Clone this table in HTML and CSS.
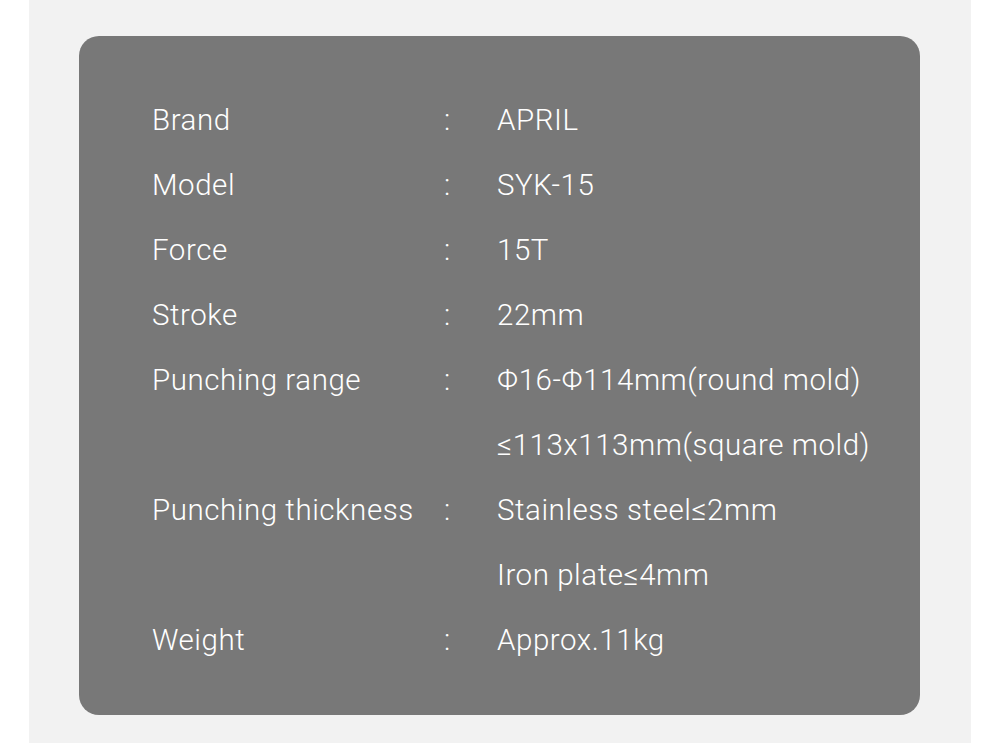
FILE: index.html
```html
<!DOCTYPE html>
<html lang="en">
<head>
<meta charset="utf-8">
<title>Specifications</title>
<link rel="stylesheet" href="styles.css">
</head>
<body>
<div class="page">
  <div class="card">
    <div class="specs">
      <div class="label">Brand</div><div class="colon">:</div><div class="value">APRIL</div>
      <div class="label">Model</div><div class="colon">:</div><div class="value">SYK-15</div>
      <div class="label">Force</div><div class="colon">:</div><div class="value">15T</div>
      <div class="label">Stroke</div><div class="colon">:</div><div class="value">22mm</div>
      <div class="label">Punching range</div><div class="colon">:</div><div class="value">Φ16-Φ114mm(round mold)</div>
      <div class="label"></div><div class="colon"></div><div class="value">≤113x113mm(square mold)</div>
      <div class="label">Punching thickness</div><div class="colon">:</div><div class="value">Stainless steel≤2mm</div>
      <div class="label"></div><div class="colon"></div><div class="value">Iron plate≤4mm</div>
      <div class="label">Weight</div><div class="colon">:</div><div class="value">Approx.11kg</div>
    </div>
  </div>
</div>
</body>
</html>
```
FILE: styles.css
```css
html, body {
  margin: 0;
  padding: 0;
  background: #ffffff;
}
.page {
  width: 942px;
  height: 743px;
  margin: 0 auto;
  background: #f2f2f2;
  padding-top: 36px;
  box-sizing: border-box;
}
.card {
  margin-left: 50px;
  width: 841px;
  height: 679px;
  box-sizing: border-box;
  background: #787878;
  border-radius: 20px;
  padding: 52px 0 0 73px;
}
.specs {
  display: grid;
  grid-template-columns: 292px 53px auto;
  grid-auto-rows: 65px;
  align-items: center;
  font-family: Roboto, "Liberation Sans", sans-serif;
  font-weight: 300;
  font-size: 29.5px;
  letter-spacing: 0.55px;
  line-height: 65px;
  color: #ffffff;
}
.label, .colon, .value {
  white-space: nowrap;
}
```
